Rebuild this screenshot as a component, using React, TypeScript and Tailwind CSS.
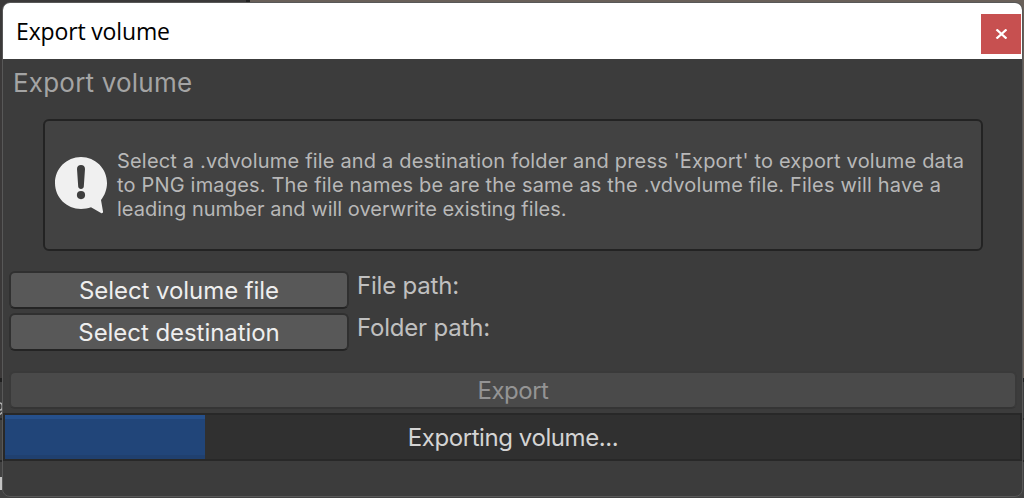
import type { ReactNode } from "react";

function Desktop({ children }: { children: ReactNode }) {
  return (
    <div className="relative h-[498px] w-[1024px] overflow-hidden bg-[#3a3a3a] font-['Inter',sans-serif]">
      <div className="absolute inset-0 flex flex-col">
        <div className="flex h-[378px]">
          <div className="w-[246px] bg-[#3b3939]" />
          <div className="w-1 bg-[#222222]" />
          <div className="flex-1 bg-[#696059]" />
        </div>
        <div className="h-1 bg-[#202020]" />
        <div className="h-9 bg-[#3c3c3c]" />
        <div className="h-0.5 bg-[#282828]" />
        <div className="h-10 bg-[#414141]" />
        <div className="h-0.5 bg-[#282828]" />
        <div className="flex-1 bg-[#414141]" />
      </div>
      <svg width="3" height="14" viewBox="0 0 3 14" className="absolute left-0 top-[402px]" fill="none" stroke="#b4b4b4" strokeWidth="1.5">
        <path d="M0 1C2 1 2.300 3 2.300 5S1.500 8 0 8M0 12.500 2.500 10" />
      </svg>
      <div className="absolute left-0 top-[477px] h-[13px] w-0.5 bg-[#c4c4c4]" />
      {children}
    </div>
  );
}

function TitleBar() {
  return (
    <header className="flex h-14 shrink-0 items-center justify-between bg-white pl-[13px]">
      <h1 className="whitespace-nowrap font-['Open_Sans','Noto_Sans',sans-serif] text-[23px] leading-[30px] tracking-[-0.15px] text-black">
        Export volume
      </h1>
      <button aria-label="Close" className="mr-px mt-[6px] flex h-10 w-10 items-center justify-center bg-[#c75050]">
        <svg width="12" height="10" viewBox="0 0 12 10" fill="none" stroke="#fff" strokeWidth="2.3">
          <path d="M1.500 0.5 11.500 9.5M11.500 0.5 1.500 9.5" />
        </svg>
      </button>
    </header>
  );
}

function HelpIcon() {
  return (
    <svg width="52" height="57" viewBox="0 0 52 57" className="shrink-0">
      <path
        d="M26 0C11.6 0 0 11.6 0 26s11.6 26 26 26c3.6 0 7-.5 10-1.700L46 55.900c1.200.6 2.200 0 2-1.400L46 43C49.600 38.500 52 32.600 52 26 52 11.600 40.400 0 26 0Z"
        fill="#f0f0f0"
      />
      <path d="M22 12C22 9.500 23.500 8 26 8s4 1.500 4 4l-1.200 17.500c-.1 1.500-1.200 2.500-2.800 2.500s-2.700-1-2.800-2.500Z" fill="#3e3e3e" />
      <circle cx="26" cy="38.100" r="4.100" fill="#3e3e3e" />
    </svg>
  );
}

function HelpBox() {
  return (
    <section className="ml-10 mr-[39px] mt-[14px] flex h-[132px] shrink-0 items-center rounded-[6px] border-2 border-[#232323] bg-[#424242] pl-[10px]">
      <HelpIcon />
      <p className="ml-[10px] whitespace-nowrap text-[20px] leading-6 tracking-[0.18px] text-[#b8b8b8]">
        Select a .vdvolume file and a destination folder and press 'Export' to export volume data
        <br />
        to PNG images. The file names be are the same as the .vdvolume file. Files will have a
        <br />
        <span className="tracking-[0.02px]">leading number and will overwrite existing files.</span>
      </p>
    </section>
  );
}

function PathRow({ label, path }: { label: string; path: string }) {
  return (
    <div className="flex h-[42px]">
      <button className="h-[38px] w-[340px] rounded-[6px] border-2 border-[#303030] border-b-[#242424] bg-[#585858] pt-px text-[24px] leading-[33px] tracking-[-0.06px] text-[#eeeeee]">
        {label}
      </button>
      <span className="ml-2 whitespace-nowrap text-[24px] leading-[30px] tracking-[-0.2px] text-[#c0c0c0]">{path}</span>
    </div>
  );
}

function ProgressBar() {
  return (
    <div className="relative mt-1 h-12 shrink-0 border-2 border-[#282828] bg-[#303030]">
      <div className="flex h-full w-[200px] flex-col bg-[#214579]">
        <div className="h-1 bg-[#26508c]" />
        <div className="mt-auto h-1 bg-[#20406f]" />
      </div>
      <span className="absolute inset-0 pl-px text-center text-[24px] leading-[46px] tracking-[-0.42px] text-[#d4d4d4]">
        Exporting volume...
      </span>
    </div>
  );
}

export default function App() {
  return (
    <Desktop>
      <main className="absolute left-[2px] top-[2px] flex h-[495px] w-[1021px] flex-col overflow-hidden rounded-[8px] border border-[#585858] bg-[#3c3c3c]">
        <TitleBar />
        <h2 className="ml-[10px] mt-[8px] h-[38px] whitespace-nowrap text-[26px] leading-8 tracking-[0.2px] text-[#a4a4a4]">
          Export volume
        </h2>
        <HelpBox />
        <div className="ml-1.5 mt-5 flex flex-col">
          <PathRow label="Select volume file" path="File path:" />
          <PathRow label="Select destination" path="Folder path:" />
        </div>
        <button
          disabled
          className="ml-[6px] mr-[5px] mt-4 h-[38px] shrink-0 rounded-[6px] border-2 border-[#3a3a3a] border-b-[#353535] bg-[#4a4a4a] pt-px text-[24px] leading-[33px] tracking-[-0.5px] text-[#949494]"
        >
          Export
        </button>
        <ProgressBar />
      </main>
    </Desktop>
  );
}
